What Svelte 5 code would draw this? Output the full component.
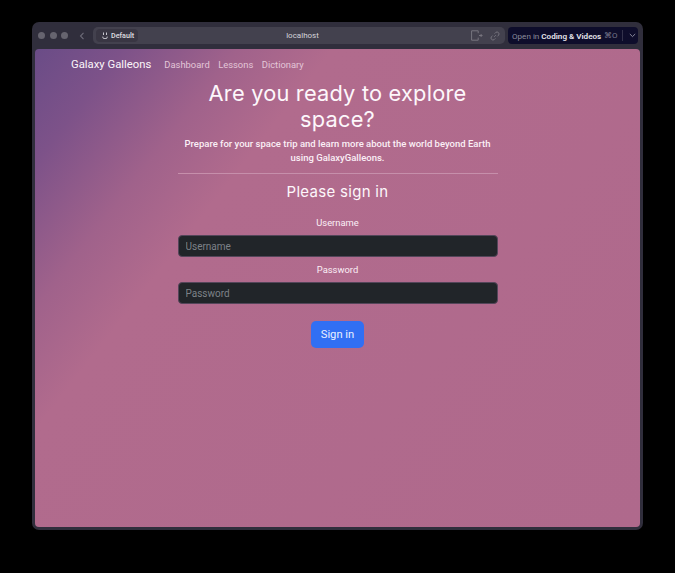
<script lang="ts">
	let username = $state('');
	let password = $state('');
	const links = ['Dashboard', 'Lessons', 'Dictionary'];
</script>

<div class="stage">
	<div class="window">
		<header class="chrome">
			<div class="lights">
				<span></span>
				<span></span>
				<span></span>
			</div>
			<svg class="back" width="6" height="8" viewBox="0 0 6 8" aria-hidden="true">
				<path d="M4.5 .8 1.5 4l3 3.2" fill="none" stroke="#6d6b78" stroke-width="1.1" />
			</svg>
			<div class="address">
				<span class="profile">
					<svg width="6" height="7" viewBox="0 0 6 7" aria-hidden="true">
						<path d="M1.5 .5v2.5M4.5 .5v2.5M.8 4.6v.6q0 1.3 1.3 1.3h1.8q1.3 0 1.3-1.3v-.6" fill="none" stroke="#c9c8d0" stroke-width="1" />
					</svg>
					Default
				</span>
				<span class="host">localhost</span>
				<div class="tools">
					<svg width="12" height="11" viewBox="0 0 12 11" aria-hidden="true">
						<path d="M.6.8h6.6v2.4M7.2 7.6v2.6H.6V.8M8 5.5h3M9.6 4l1.5 1.5L9.6 7" fill="none" stroke="#77757f" stroke-width="1" />
					</svg>
					<svg width="10" height="10" viewBox="0 0 10 10" aria-hidden="true">
						<path d="M4.2 5.8 5.8 4.2M4.6 2.6 5.8 1.4a2 2 0 0 1 2.8 2.8L7.4 5.4M5.4 7.4 4.2 8.6A2 2 0 0 1 1.4 5.8L2.6 4.6" fill="none" stroke="#77757f" stroke-width="1" />
					</svg>
				</div>
			</div>
			<div class="open-in">
				<span class="open-label">Open in <b>Coding &amp; Videos</b></span>
				<span class="shortcut">⌘O</span>
				<span class="divider"></span>
				<svg width="7" height="5" viewBox="0 0 7 5" aria-hidden="true">
					<path d="m.8 1 2.7 2.6L6.2 1" fill="none" stroke="#8a8a9c" stroke-width="1" />
				</svg>
			</div>
		</header>

		<main class="page">
			<nav class="navbar">
				<span class="brand">Galaxy Galleons</span>
				{#each links as link}
					<a href="#{link.toLowerCase()}">{link}</a>
				{/each}
			</nav>

			<section class="content">
				<h1>Are you ready to explore space?</h1>
				<p class="lead">Prepare for your space trip and learn more about the world beyond Earth using GalaxyGalleons.</p>
				<hr />
				<h2>Please sign in</h2>

				<form onsubmit={(e) => e.preventDefault()}>
					<label for="username">Username</label>
					<input id="username" placeholder="Username" bind:value={username} />
					<label for="password">Password</label>
					<input id="password" type="password" placeholder="Password" bind:value={password} />
					<button type="submit">Sign in</button>
				</form>
			</section>
		</main>
	</div>
</div>

<style>
	:global(body) {
		margin: 0;
		background: #000;
		font-family: Roboto, 'Liberation Sans', sans-serif;
	}

	.stage {
		box-sizing: border-box;
		width: 675px;
		height: 573px;
		padding: 22px 32px 43px;
		background: #000;
	}

	.window {
		box-sizing: border-box;
		display: flex;
		flex-direction: column;
		height: 508px;
		padding: 0 3px 3px;
		border-radius: 7px;
		background: #302e3c;
	}

	.chrome {
		display: flex;
		align-items: center;
		flex: 0 0 27px;
		height: 27px;
	}

	.lights {
		display: flex;
		gap: 4.5px;
		margin-left: 3px;
	}

	.lights span {
		width: 7px;
		height: 7px;
		border-radius: 50%;
		background: #66646f;
	}

	.back {
		margin-left: 11px;
	}

	.address {
		display: grid;
		grid-template-columns: 1fr auto 1fr;
		align-items: center;
		width: 412px;
		height: 17px;
		margin-left: 8px;
		border-radius: 5px;
		background: #43414e;
	}

	.profile {
		display: inline-flex;
		align-items: center;
		justify-self: start;
		gap: 3px;
		height: 13px;
		margin-left: 3px;
		padding: 0 4px 0 6px;
		border-radius: 4px;
		background: #393643;
		color: #d8d7dc;
		font-size: 7.2px;
		font-weight: 600;
	}

	.host {
		margin-left: 7px;
		color: #d4d3d9;
		font-size: 8px;
	}

	.tools {
		display: flex;
		align-items: center;
		justify-self: end;
		gap: 7px;
		margin-right: 5px;
	}

	.open-in {
		display: flex;
		align-items: center;
		width: 130px;
		height: 17px;
		margin-left: 3px;
		padding-left: 4px;
		box-sizing: border-box;
		border-radius: 4px;
		background: #0e0d2b;
	}

	.open-label {
		width: 88px;
		color: #8d8d9e;
		font-size: 8.1px;
		white-space: nowrap;
	}

	.open-label b {
		color: #e6e6ec;
		font-weight: 600;
	}

	.shortcut {
		width: 14px;
		margin-left: 4px;
		color: #77778a;
		font-size: 8px;
		white-space: nowrap;
	}

	.divider {
		width: 1px;
		height: 11px;
		margin: 0 6px 0 4px;
		background: #34334c;
	}

	.page {
		flex: 1;
		min-height: 0;
		border-radius: 4px;
		background:
			linear-gradient(128deg, #6a4c87 0, #7d5289 70px, #a0628b 160px, #b16b8d 235px, #af698c 100%);
		color: #fff;
	}

	.navbar {
		display: flex;
		align-items: baseline;
		height: 32px;
		padding: 9px 0 0 36px;
		box-sizing: border-box;
	}

	.brand {
		margin-right: 13px;
		font-size: 11.3px;
		color: #fbf5f9;
	}

	.navbar a {
		margin-right: 8.5px;
		color: #e3c6d8;
		font-size: 9.4px;
		text-decoration: none;
	}

	.content {
		width: 320px;
		margin: 0 auto;
		text-align: center;
	}

	h1 {
		margin: 0;
		font-family: Inter, sans-serif;
		font-size: 21.8px;
		font-weight: 400;
		line-height: 25.6px;
		letter-spacing: 0.2px;
		color: #fdf7fb;
	}

	.lead {
		margin: 5px 0 0;
		font-size: 9.5px;
		font-weight: 500;
		line-height: 14px;
		color: #fbeff6;
	}

	hr {
		margin: 8px 0 0;
		border: 0;
		border-top: 1px solid #c68fab;
	}

	h2 {
		margin: 8px 0 0;
		font-family: Inter, sans-serif;
		font-size: 15px;
		font-weight: 400;
		line-height: 20px;
		letter-spacing: 0.3px;
		color: #fdf7fb;
	}

	form {
		display: flex;
		flex-direction: column;
		align-items: center;
		margin-top: 14px;
	}

	label {
		height: 13px;
		margin-bottom: 6px;
		font-size: 9.4px;
		line-height: 13px;
		color: #fbeff6;
	}

	input {
		box-sizing: border-box;
		width: 320px;
		height: 22px;
		margin-bottom: 6px;
		padding: 0 7px;
		border: 1px solid #54465a;
		border-radius: 4px;
		background: #212529;
		color: #fff;
		font: 10px Roboto, 'Liberation Sans', sans-serif;
		outline: none;
	}

	input::placeholder {
		color: #7d8288;
		opacity: 1;
	}

	button {
		width: 53px;
		height: 27px;
		margin-top: 11px;
		padding: 0;
		border: 0;
		border-radius: 5px;
		background: #316ff3;
		color: #eaf0ff;
		font: 11.2px Roboto, 'Liberation Sans', sans-serif;
	}
</style>
